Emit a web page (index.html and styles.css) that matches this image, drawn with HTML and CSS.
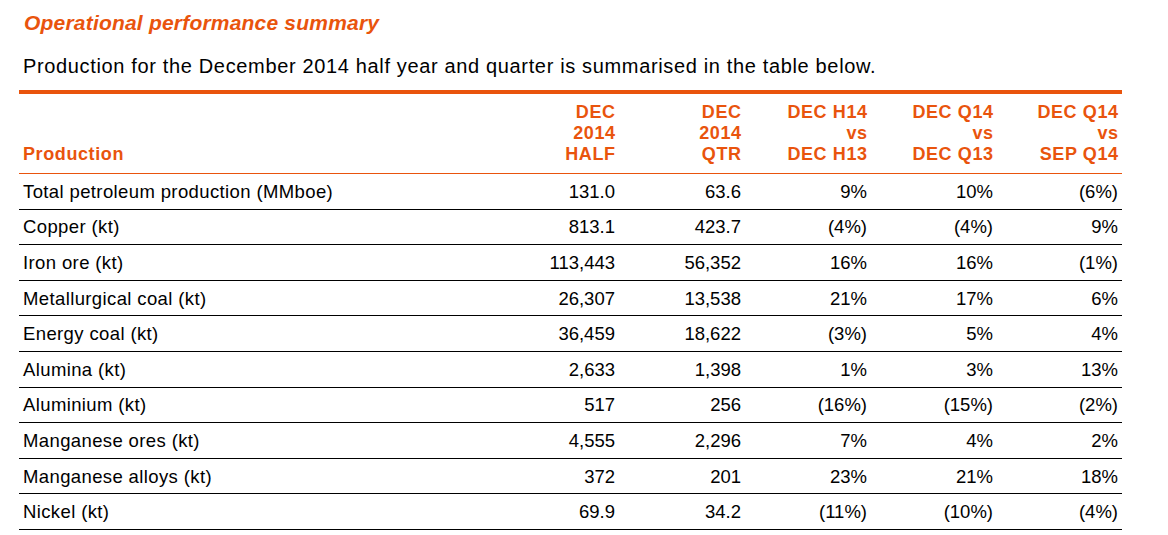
FILE: index.html
```html
<!DOCTYPE html>
<html lang="en">
<head>
<meta charset="utf-8">
<title>Operational performance summary</title>
<link rel="stylesheet" href="styles.css">
</head>
<body>
<div class="page">
  <h1 class="title">Operational performance summary</h1>
  <p class="intro">Production for the December 2014 half year and quarter is summarised in the table below.</p>
  <table class="prod">
    <colgroup>
      <col class="c-label">
      <col class="c-num">
      <col class="c-num">
      <col class="c-num">
      <col class="c-num">
      <col class="c-last">
    </colgroup>
    <thead>
      <tr>
        <th class="label">Production</th>
        <th>DEC<br>2014<br>HALF</th>
        <th>DEC<br>2014<br>QTR</th>
        <th>DEC H14<br>vs<br>DEC H13</th>
        <th>DEC Q14<br>vs<br>DEC Q13</th>
        <th>DEC Q14<br>vs<br>SEP Q14</th>
      </tr>
    </thead>
    <tbody>
      <tr><td class="label">Total petroleum production (MMboe)</td><td>131.0</td><td>63.6</td><td>9%</td><td>10%</td><td>(6%)</td></tr>
      <tr><td class="label">Copper (kt)</td><td>813.1</td><td>423.7</td><td>(4%)</td><td>(4%)</td><td>9%</td></tr>
      <tr><td class="label">Iron ore (kt)</td><td>113,443</td><td>56,352</td><td>16%</td><td>16%</td><td>(1%)</td></tr>
      <tr><td class="label">Metallurgical coal (kt)</td><td>26,307</td><td>13,538</td><td>21%</td><td>17%</td><td>6%</td></tr>
      <tr><td class="label">Energy coal (kt)</td><td>36,459</td><td>18,622</td><td>(3%)</td><td>5%</td><td>4%</td></tr>
      <tr><td class="label">Alumina (kt)</td><td>2,633</td><td>1,398</td><td>1%</td><td>3%</td><td>13%</td></tr>
      <tr><td class="label">Aluminium (kt)</td><td>517</td><td>256</td><td>(16%)</td><td>(15%)</td><td>(2%)</td></tr>
      <tr><td class="label">Manganese ores (kt)</td><td>4,555</td><td>2,296</td><td>7%</td><td>4%</td><td>2%</td></tr>
      <tr><td class="label">Manganese alloys (kt)</td><td>372</td><td>201</td><td>23%</td><td>21%</td><td>18%</td></tr>
      <tr><td class="label">Nickel (kt)</td><td>69.9</td><td>34.2</td><td>(11%)</td><td>(10%)</td><td>(4%)</td></tr>
    </tbody>
  </table>
</div>
</body>
</html>
```

FILE: styles.css
```css
html, body {
  margin: 0;
  padding: 0;
  background: #ffffff;
}

body {
  font-family: "Liberation Sans", Arial, sans-serif;
  color: #000000;
}

.page {
  padding: 11px 0 0 19px;
  width: 1103px;
}

.title {
  margin: 0 0 0 5px;
  font-size: 21px;
  line-height: 24px;
  font-weight: bold;
  font-style: italic;
  letter-spacing: 0.2px;
  color: #e9540d;
}

.intro {
  margin: 19px 0 12px 4px;
  font-size: 20px;
  line-height: 24px;
  letter-spacing: 0.65px;
}

.prod {
  width: 1103px;
  border-collapse: collapse;
  table-layout: fixed;
  border-top: 4px solid #e9540d;
}

.c-label { width: 474px; }
.c-num { width: 126px; }
.c-last { width: 125px; }

.prod th {
  color: #e9540d;
  font-size: 18px;
  line-height: 21px;
  font-weight: bold;
  letter-spacing: 0.6px;
  text-align: right;
  vertical-align: bottom;
  padding: 8px 3.4px 8px 0;
  border-bottom: 1px solid #e9540d;
}

.prod th.label,
.prod td.label {
  text-align: left;
  padding-left: 4px;
}

.prod td {
  height: 34.6px;
  padding: 0 4px 0 0;
  font-size: 18.5px;
  line-height: 21px;
  text-align: right;
  vertical-align: middle;
  border-bottom: 1px solid #000000;
}

.prod td.label {
  letter-spacing: 0.38px;
}
```
